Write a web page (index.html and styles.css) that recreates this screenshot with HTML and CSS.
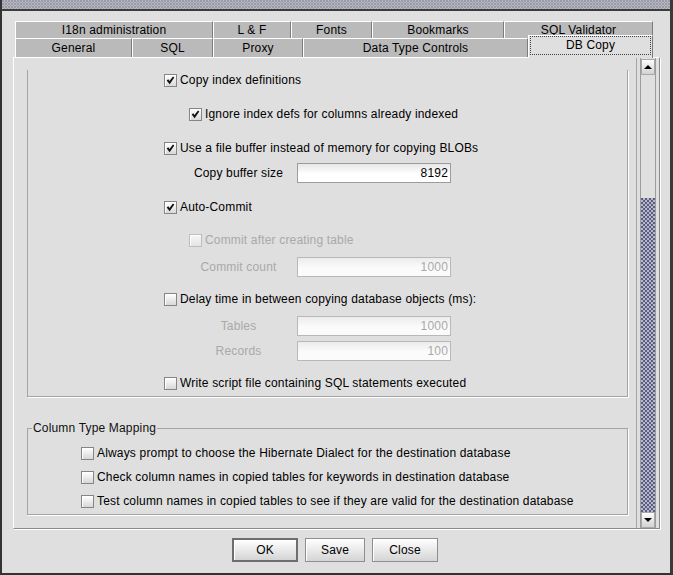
FILE: index.html
```html
<!DOCTYPE html>
<html lang="en">
<head>
    <meta charset="UTF-8">
    <title>Global Preferences</title>
    <link rel="stylesheet" href="styles.css">
</head>
<body>
    <div class="window">
        <div class="titlebar"></div>
        <div class="dialog">
            <div class="tabs">
                <div class="tabrow tabrow-back">
                    <div class="tab">I18n administration</div>
                    <div class="tab">L &amp; F</div>
                    <div class="tab">Fonts</div>
                    <div class="tab">Bookmarks</div>
                    <div class="tab">SQL Validator</div>
                </div>
                <div class="tabrow tabrow-front">
                    <div class="tab">General</div>
                    <div class="tab">SQL</div>
                    <div class="tab">Proxy</div>
                    <div class="tab">Data Type Controls</div>
                    <div class="tab selected"><span class="focus">DB Copy</span></div>
                </div>
            </div>

            <div class="tabpanel">
                <div class="viewport">
                    <!-- scrolled: top edge of this group is out of view -->
                    <div class="group group-copy">
                        <div class="row first">
                            <span class="cb"><svg viewBox="0 0 13 13"><path d="M2 6.6 L3.9 5 L5.3 7.2 L9.4 1.8 L11 3 L5.5 10.9 Z"/></svg></span>
                            Copy index definitions
                        </div>
                        <div class="row sub loose">
                            <span class="cb"><svg viewBox="0 0 13 13"><path d="M2 6.6 L3.9 5 L5.3 7.2 L9.4 1.8 L11 3 L5.5 10.9 Z"/></svg></span>
                            Ignore index defs for columns already indexed
                        </div>
                        <div class="row loose">
                            <span class="cb"><svg viewBox="0 0 13 13"><path d="M2 6.6 L3.9 5 L5.3 7.2 L9.4 1.8 L11 3 L5.5 10.9 Z"/></svg></span>
                            Use a file buffer instead of memory for copying BLOBs
                        </div>
                        <div class="field-row near">
                            <span class="field-label">Copy buffer size</span>
                            <span class="field">8192</span>
                        </div>
                        <div class="row loose">
                            <span class="cb"><svg viewBox="0 0 13 13"><path d="M2 6.6 L3.9 5 L5.3 7.2 L9.4 1.8 L11 3 L5.5 10.9 Z"/></svg></span>
                            Auto-Commit
                        </div>
                        <div class="row sub disabled">
                            <span class="cb"></span>
                            Commit after creating table
                        </div>
                        <div class="field-row disabled">
                            <span class="field-label">Commit count</span>
                            <span class="field">1000</span>
                        </div>
                        <div class="row tight">
                            <span class="cb"></span>
                            Delay time in between copying database objects (ms):
                        </div>
                        <div class="field-row disabled">
                            <span class="field-label">Tables</span>
                            <span class="field">1000</span>
                        </div>
                        <div class="field-row near disabled">
                            <span class="field-label">Records</span>
                            <span class="field">100</span>
                        </div>
                        <div class="row tight">
                            <span class="cb"></span>
                            Write script file containing SQL statements executed
                        </div>
                    </div>

                    <fieldset class="group group-mapping">
                        <legend>Column Type Mapping</legend>
                        <div class="row first">
                            <span class="cb"></span>
                            Always prompt to choose the Hibernate Dialect for the destination database
                        </div>
                        <div class="row">
                            <span class="cb"></span>
                            Check column names in copied tables for keywords in destination database
                        </div>
                        <div class="row">
                            <span class="cb"></span>
                            Test column names in copied tables to see if they are valid for the destination database
                        </div>
                    </fieldset>
                </div>

                <div class="vscroll">
                    <div class="arrow up"></div>
                    <div class="track"><div class="thumb"></div></div>
                    <div class="arrow down"></div>
                </div>
            </div>

            <div class="buttons">
                <button class="btn default">OK</button>
                <button class="btn save">Save</button>
                <button class="btn">Close</button>
            </div>
        </div>
    </div>
</body>
</html>
```

FILE: styles.css
```css
body {
    margin: 0;
    background: #dfdfdf;
    font-family: "Liberation Sans", Arial, sans-serif;
    font-size: 12px;
    letter-spacing: 0.17px;
    color: #000;
}
.window {
    width: 673px;
    height: 575px;
    box-sizing: border-box;
    background: #dfdfdf;
    border-left: 2px solid #333;
    border-right: 3px solid #3a3a3a;
    border-bottom: 2px solid #333;
    overflow: hidden;
}
.titlebar {
    height: 9px;
    border-bottom: 2px solid #3c3c3c;
    background-color: #d6d6de;
    background-image:
        radial-gradient(circle at 1px 1px, #9a9aa8 0.8px, transparent 1px),
        radial-gradient(circle at 1px 1px, #9a9aa8 0.8px, transparent 1px);
    background-size: 3px 3px;
    background-position: 0 0, 1.5px 1.5px;
}
.dialog {
    padding: 10px 0 0 11px;
}

/* tabs */
.tabs {
    margin-left: 2px;
    width: 638px;
}
.tabrow { display: grid; }
.tabrow-back {
    grid-template-columns: 198px 78px 81px 132px 149px;
    grid-template-rows: 17px;
}
.tabrow-front {
    grid-template-columns: 117px 81px 90px 225px 125px;
    grid-template-rows: 19px;
}
.tab {
    box-sizing: border-box;
    background: #bababa;
    border-top: 1px solid #fff;
    border-left: 1px solid #fff;
    border-right: 1px solid #7c7c7c;
    text-align: center;
    white-space: nowrap;
    overflow: hidden;
}
.tabrow-back .tab { line-height: 16px; }
.tabrow-front .tab { line-height: 18px; }
.tab.selected {
    background: #dfdfdf;
    align-self: end;
    height: 23px;
    margin-bottom: -1px;
    padding: 0 1px;
    position: relative;
    z-index: 1;
}
.focus {
    display: block;
    border: 1px dotted #404040;
    line-height: 17px;
}

/* panel */
.tabpanel {
    display: flex;
    width: 647px;
    height: 472px;
    box-sizing: border-box;
    border-top: 1px solid #fff;
    border-left: 1px solid #fff;
    border-right: 1px solid #8a8a8a;
    border-bottom: 1px solid #8a8a8a;
    box-shadow: 1px 1px 0 #fff;
}
.viewport {
    width: 622px;
    border-right: 1px solid #a4a4a4;
    overflow: hidden;
}

.group {
    border: 1px solid #a4a4a4;
    box-shadow: 1px 1px 0 #fff;
}
.group-copy {
    margin: 0 8px 0 13px;
    border-top: none;
    padding-bottom: 3px;
}
.group-mapping {
    margin: 24px 8px 0 13px;
    padding: 0 0 3px 4px;
    min-width: 0;
}
.group-mapping legend {
    padding: 0 1px;
    line-height: 14px;
    color: #111;
}

.row {
    display: flex;
    align-items: center;
    height: 20px;
    margin-top: 13px;
    padding-left: 136px;
    white-space: nowrap;
}
.row.first { margin-top: 12px; }
.row.loose { margin-top: 14px; }
.row.tight { margin-top: 12px; }
.row.sub { padding-left: 161px; }
.group-mapping .row {
    padding-left: 49px;
    margin-top: 4px;
}
.group-mapping .row.first { margin-top: 8px; }

.cb {
    width: 13px;
    height: 13px;
    box-sizing: border-box;
    margin-right: 3px;
    border: 1px solid #858585;
    background: linear-gradient(#ffffff, #d8d8d8);
    box-shadow: inset 1px 1px 0 #fff;
    flex: none;
}
.cb svg {
    display: block;
    width: 11px;
    height: 11px;
    fill: #111;
}

.field-row {
    display: flex;
    align-items: center;
    height: 20px;
    margin-top: 7px;
    padding-left: 152px;
}
.field-row.near { margin-top: 5px; }
.field-label {
    width: 117px;
    text-align: center;
}
.field {
    width: 154px;
    height: 20px;
    box-sizing: border-box;
    border: 1px solid #9c9c9c;
    background: linear-gradient(#e6e6e6, #ffffff 55%);
    text-align: right;
    padding-right: 2px;
    line-height: 18px;
}

.disabled { color: #a9a9a9; }
.disabled .cb {
    border-color: #bdbdbd;
    background: linear-gradient(#f6f6f6, #e4e4e4);
}
.disabled .field {
    border-color: #b8b8b8;
    background: linear-gradient(#ececec, #fbfbfb 55%);
}

/* scrollbar */
.vscroll {
    width: 14px;
    margin: 0 3px;
    border-left: 1px solid #9c9c9c;
    border-right: 1px solid #9c9c9c;
    padding-top: 1px;
    display: flex;
    flex-direction: column;
}
.arrow {
    height: 16px;
    box-sizing: border-box;
    border: 1px solid #a8a8a8;
    background: linear-gradient(#fcfcfc, #d2d2d2);
    display: flex;
    align-items: center;
    justify-content: center;
}
.arrow::after {
    content: "";
    border-left: 4px solid transparent;
    border-right: 4px solid transparent;
}
.arrow.up::after { border-bottom: 4px solid #000; }
.arrow.down::after { border-top: 4px solid #000; }
.track {
    flex: 1;
    display: flex;
    flex-direction: column;
    justify-content: flex-end;
}
.thumb {
    height: 314px;
    background-color: #b6b6cc;
    background-image:
        radial-gradient(circle at 1px 1px, #5e5e7e 0.8px, transparent 1px),
        radial-gradient(circle at 1px 1px, #5e5e7e 0.8px, transparent 1px);
    background-size: 4px 4px;
    background-position: 0 0, 2px 2px;
}

/* buttons */
.buttons {
    width: 644px;
    display: flex;
    justify-content: center;
    gap: 7px;
    margin-top: 9px;
}
.btn {
    width: 66px;
    height: 24px;
    box-sizing: border-box;
    padding: 0;
    font: inherit;
    letter-spacing: inherit;
    color: #000;
    border: 1px solid #8e8e8e;
    background: linear-gradient(#ffffff, #d4d4d4);
    box-shadow: inset 1px 1px 0 #fff;
}
.btn.save { width: 60px; }
.btn.default { border: 2px solid #6e6e6e; }
```
